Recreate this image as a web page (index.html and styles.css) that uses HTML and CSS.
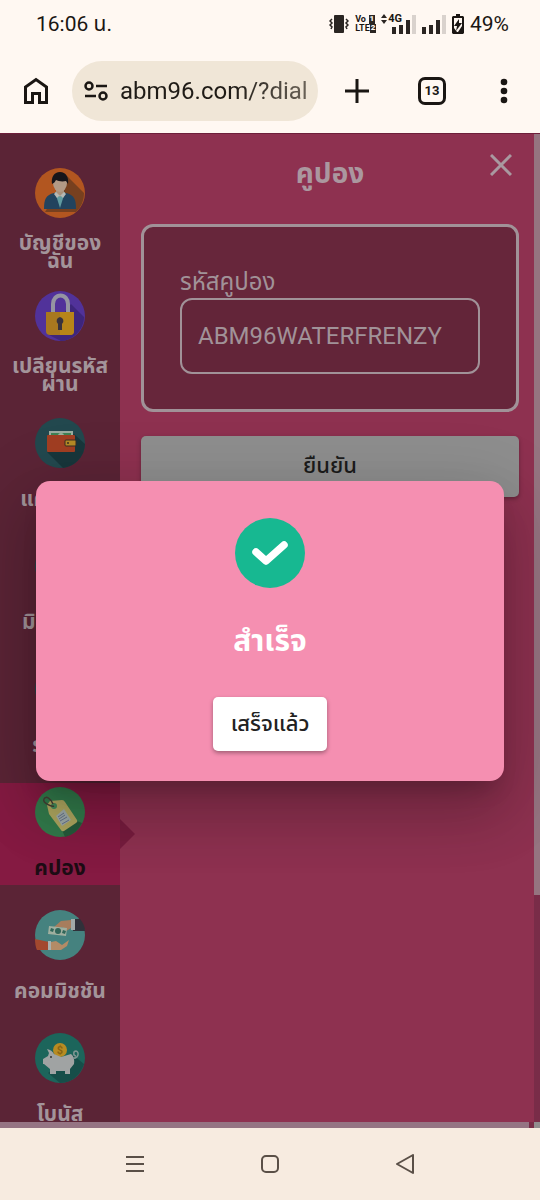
FILE: index.html
```html
<!DOCTYPE html>
<html lang="th">
<head>
    <meta charset="UTF-8">
    <meta name="viewport" content="width=device-width, initial-scale=1.0">
    <title>คูปอง</title>
    <link rel="stylesheet" href="styles.css">
</head>
<body>

    <!-- Phone status bar -->
    <div class="status-bar">
        <span class="clock">16:06 น.</span>
        <div class="status-icons">
            <svg width="20" height="20" viewBox="0 0 20 20" fill="none" stroke="#2a2522" stroke-width="1.5">
                <rect x="5" y="1" width="10" height="18" rx="1" fill="#2a2522" stroke="none"/>
                <path d="M3 5L1 7l2 2-2 2 2 2-1 2M17 5l2 2-2 2 2 2-2 2 1 2"/>
            </svg>
            <div class="volte">
                <span>Vo <b>1</b></span>
                <span>LTE<b>2</b></span>
            </div>
            <div class="signal">
                <svg width="7" height="10" viewBox="0 0 7 10" fill="#2a2522"><path d="M0 4l3-4 3 4zM0 6h6l-3 4z"/></svg>
                <span class="net">4G</span>
                <svg class="bars" width="24" height="20" viewBox="0 0 24 20" fill="#2a2522">
                    <path d="M0 13h4v7H0zM7 11h4v9H7zM14 6h4v14h-4z"/><path fill="#d9d2cd" d="M20 1h4v19h-4z"/>
                </svg>
            </div>
            <svg width="24" height="20" viewBox="0 0 24 20" fill="#2a2522">
                <path d="M0 13h4v7H0zM7 11h4v9H7zM14 6h4v14h-4z"/><path fill="#d9d2cd" d="M20 1h4v19h-4z"/>
            </svg>
            <svg width="12" height="20" viewBox="0 0 12 20">
                <path fill="#1a1613" d="M4 0h4v2h3l1 1v16l-1 1H1l-1-1V3l1-1h3z"/>
                <path fill="#fff8f2" d="M2 4h8v14H2z"/>
                <path fill="#1a1613" d="M7 5l-5 7h3l-1 5 6-8H7zM2 14v4h3zM10 12v6H6z"/>
            </svg>
            <span class="percent">49%</span>
        </div>
    </div>

    <!-- Browser toolbar -->
    <div class="toolbar">
        <button class="tool" aria-label="Home">
            <svg width="26" height="28" viewBox="0 0 26 28" fill="none" stroke="#1a1613" stroke-width="3">
                <path d="M2.500 25.500V10L13 2.500 23.500 10v15.500h-7v-9h-7v9z"/>
            </svg>
        </button>
        <div class="address">
            <svg width="24" height="20" viewBox="0 0 24 20" fill="none" stroke="#1a1613" stroke-width="2.500">
                <circle cx="5" cy="5" r="3.500"/><path d="M12 5h11M1 15h11"/><circle cx="19" cy="15" r="3.500"/>
            </svg>
            <span class="url">abm96.com/?dial</span>
        </div>
        <button class="tool tool-plus" aria-label="New tab">
            <svg width="24" height="24" viewBox="0 0 24 24" stroke="#1a1613" stroke-width="3"><path d="M12 0v24M0 12h24"/></svg>
        </button>
        <button class="tabs">13</button>
        <button class="tool" aria-label="Menu">
            <svg width="8" height="26" viewBox="0 0 8 26" fill="#1a1613"><circle cx="4" cy="4" r="3.300"/><circle cx="4" cy="13" r="3.300"/><circle cx="4" cy="22" r="3.300"/></svg>
        </button>
    </div>

    <div class="app">
        <div class="view">
            <nav class="sidebar">
                <a class="item two-line" href="#">
                    <svg class="icon" viewBox="0 0 50 50">
                        <circle cx="25" cy="25" r="25" fill="#b25620"/>
                        <path d="M32 8l17 17a25 25 0 0 1-8 19H10z" fill="#77401f"/>
                        <path d="M9 41c0-10 2-14 10-16h12c8 2 10 6 10 16z" fill="#22435e"/>
                        <path d="M20 24l5 16 5-16z" fill="#609ba0"/>
                        <path d="M21 19h8v6l-4 4-4-4z" fill="#a8917c"/>
                        <path d="M21 24l-2 2 3 4 3-3 3 3 3-4-2-2-4 4z" fill="#b6b8b5"/>
                        <ellipse cx="25" cy="15" rx="7" ry="9" fill="#b29a86"/>
                        <path d="M17 16c-1-7 2-12 8-12s9 5 8 12l-2-3c-4 1-8 0-10-1-1 2-2 3-4 4z" fill="#17151a"/>
                    </svg>
                    <span class="label">บัญชีของฉัน</span>
                </a>
                <a class="item item-tall two-line" href="#">
                    <svg class="icon" viewBox="0 0 50 50">
                        <circle cx="25" cy="25" r="25" fill="#51329a"/>
                        <path d="M36 13l13 13c0 12-10 23-23 24L12 43z" fill="#3e267c"/>
                        <path d="M18 23V13a7 8 0 0 1 15 0v10" fill="none" stroke="#9595a2" stroke-width="4"/>
                        <path d="M11 21h28v19q0 4-4 4H15q-4 0-4-4z" fill="#a8781f"/>
                        <path d="M25 21h14v19q0 4-4 4H25z" fill="#b78518"/>
                        <path d="M25 26a4 4 0 0 1 2 7v6h-4v-6a4 4 0 0 1 2-7z" fill="#38323d"/>
                    </svg>
                    <span class="label">เปลียนรหัสผ่าน</span>
                </a>
                <a class="item" href="#">
                    <svg class="icon" viewBox="0 0 50 50">
                        <circle cx="25" cy="25" r="25" fill="#22484e"/>
                        <path d="M39 16l11 10a25 25 0 0 1-22 24L12 34z" fill="#18363b"/>
                        <path d="M14 13h24v8H14z" fill="#9aaca0"/><path d="M16 15h20v6H16z" fill="#3e8254"/><circle cx="26" cy="18" r="3" fill="#9bb09c"/>
                        <rect x="12" y="17" width="28" height="17" rx="1" fill="#a13e22"/>
                        <rect x="30" y="22" width="11" height="6" rx="1" fill="#b68a25" stroke="#382c23"/><circle cx="33" cy="25" r="1" fill="#382c23"/>
                    </svg>
                    <span class="label">แคชแบ็ค</span>
                </a>
                <a class="item" href="#">
                    <svg class="icon" viewBox="0 0 50 50"><circle cx="25" cy="25" r="25" fill="#22484e"/></svg>
                    <span class="label">มิตรภาพ</span>
                </a>
                <a class="item" href="#">
                    <svg class="icon" viewBox="0 0 50 50"><circle cx="25" cy="25" r="25" fill="#22484e"/></svg>
                    <span class="label">รางวัล</span>
                </a>
                <a class="item active" href="#">
                    <svg class="icon" viewBox="0 0 50 50">
                        <circle cx="25" cy="25" r="25" fill="#327a4b"/>
                        <path d="M42 34l5 2a25 25 0 0 1-17 14l-3-7z" fill="#255a3b"/>
                        <path d="M12 18l3-4 12-1q2 0 3 2l12 18q1 2-1 3l-12 8q-2 1-3-1L14 27z" fill="#aea65f"/>
                        <path d="M29 22l7 11-9 6-6-10z" fill="#9eaaa8"/>
                        <path d="M23 30l6-4M24 32l6-4M25 34l7-4M27 37l7-4" stroke="#65718b"/>
                        <circle cx="19" cy="19" r="3" fill="#438958"/>
                        <path d="M19 19c-2 1-12-3-10-7s7 0 9 5" fill="none" stroke="#453f35" stroke-width="1.500"/>
                    </svg>
                    <span class="label">คปอง</span>
                </a>
                <a class="item" href="#">
                    <svg class="icon" viewBox="0 0 50 50">
                        <circle cx="25" cy="25" r="25" fill="#45827f"/>
                        <path d="M38 9h7q5 6 5 12H38z" fill="#30313a"/><path d="M36 9h4v11h-4z" fill="#a2aaa8"/>
                        <path d="M36 10l-10 1-7 6 1 2 8-2-5 7 2 1 11-7z" fill="#a77d5d"/>
                        <path d="M14 16l18 2-1 8-18-2z" fill="#9faf9f"/><circle cx="23" cy="21" r="3" fill="#31665a"/><path d="M16 18l3 1-1 3-3-1zM28 20l3 1-1 3-3-1z" fill="#31665a"/>
                        <path d="M0 29l14 3v8H2Q0 36 0 29z" fill="#a3482e"/><path d="M13 31h3v9h-3z" fill="#a9b0ad"/>
                        <path d="M16 32l5-1 6 4 7-5-2 6-6 4H16z" fill="#b38b66"/>
                    </svg>
                    <span class="label">คอมมิชชัน</span>
                </a>
                <a class="item" href="#">
                    <svg class="icon" viewBox="0 0 50 50">
                        <circle cx="25" cy="25" r="25" fill="#1c655b"/>
                        <path d="M38 22l11 9q-6 18-24 19L13 40z" fill="#164e49"/>
                        <circle cx="25" cy="17" r="7" fill="#b78b22"/><text class="coin" x="25" y="21">$</text>
                        <path d="M14 20l-2-4q5 1 7 5l7 3 10-3q4 3 3 10l-4 5v5h-5v-3h-9v3h-6v-5l-6-5H8v-5l5-3z" fill="#a0a3a3"/>
                        <path d="M38 25c5 1 7-6 3-7-3 0-3 5 0 5" fill="none" stroke="#7f9693" stroke-width="1.500"/><circle cx="16" cy="24" r="1" fill="#333"/>
                    </svg>
                    <span class="label">โบนัส</span>
                </a>
            </nav>

            <main class="content">
                <button class="close" aria-label="Close">
                    <svg width="22" height="22" viewBox="0 0 22 22" stroke="#a999a0" stroke-width="3"><path d="M1 1l20 20M21 1L1 21"/></svg>
                </button>
                <h1 class="title">คูปอง</h1>
                <div class="card">
                    <label class="field-label" for="coupon">รหัสคูปอง</label>
                    <input class="field" id="coupon" type="text" value="ABM96WATERFRENZY">
                </div>
                <button class="confirm">ยืนยัน</button>
            </main>

            <div class="scroll-y"><div class="thumb-y"></div></div>
        </div>
        <div class="scroll-x"><div class="thumb-x"></div><div class="corner"></div></div>

        <!-- Success dialog -->
        <div class="overlay">
            <div class="dialog" role="dialog">
                <svg width="70" height="70" viewBox="0 0 70 70">
                    <circle cx="35" cy="35" r="35" fill="#17b891"/>
                    <path d="M21 34l10 9 18-16" fill="none" stroke="#fff" stroke-width="7.500" stroke-linecap="round" stroke-linejoin="round"/>
                </svg>
                <h2 class="dialog-title">สำเร็จ</h2>
                <button class="done">เสร็จแล้ว</button>
            </div>
        </div>
    </div>

    <!-- Phone navigation bar -->
    <div class="nav-bar">
        <button class="tool" aria-label="Recent apps">
            <svg width="20" height="18" viewBox="0 0 20 18" stroke="#5a4f47" stroke-width="2"><path d="M1 2h18M1 9h18M1 16h18"/></svg>
        </button>
        <button class="tool" aria-label="Home screen">
            <svg width="20" height="20" viewBox="0 0 20 20" fill="none" stroke="#5a4f47" stroke-width="2"><rect x="2" y="2" width="16" height="16" rx="4"/></svg>
        </button>
        <button class="tool" aria-label="Back">
            <svg width="20" height="20" viewBox="0 0 20 20" fill="none" stroke="#5a4f47" stroke-width="2" stroke-linejoin="round"><path d="M18 1v18L2 10z"/></svg>
        </button>
    </div>

</body>
</html>
```

FILE: styles.css
```css
* {
    box-sizing: border-box;
}

body {
    margin: 0;
    height: 100vh;
    display: flex;
    flex-direction: column;
    background-color: #fff8f2;
    font-family: Roboto, "Noto Sans Thai", "Noto Sans", sans-serif;
    color: #1a1613;
}

button {
    font-family: inherit;
    border: none;
    padding: 0;
    cursor: pointer;
}

svg {
    display: block;
    flex-shrink: 0;
}

/* Status bar */
.status-bar {
    height: 48px;
    flex-shrink: 0;
    padding: 0 31px 0 36px;
    display: flex;
    justify-content: space-between;
    align-items: center;
    font-size: 21px;
}

.status-icons {
    display: flex;
    align-items: center;
    gap: 6px;
}

.volte {
    display: flex;
    flex-direction: column;
    width: 20px;
    font-size: 9px;
    line-height: 9px;
    font-weight: bold;
}

.volte span {
    display: flex;
    justify-content: space-between;
}

.volte b {
    background-color: #2a2522;
    color: #fff8f2;
    padding: 0 1px;
    font-size: 8px;
    line-height: 8px;
}

.signal {
    display: flex;
    align-items: flex-start;
}

.net {
    font-size: 11px;
    line-height: 10px;
    font-weight: bold;
}

.bars {
    margin-left: -10px;
}

/* Toolbar */
.toolbar {
    height: 85px;
    flex-shrink: 0;
    padding: 0 32px 0 23px;
    display: flex;
    align-items: center;
}

.tool {
    background: none;
}

.tool-plus {
    margin: 0 49px 0 27px;
}

.address {
    flex: 1;
    min-width: 0;
    display: flex;
    align-items: center;
    gap: 12px;
    height: 60px;
    margin-left: 23px;
    padding: 0 10px 0 12px;
    border-radius: 30px;
    background-color: #f0e6d7;
    overflow: hidden;
}

.url {
    font-size: 24px;
    white-space: nowrap;
    background: linear-gradient(90deg, #1f1b16 60%, #6b6358);
    background-clip: text;
    color: transparent;
}

.tabs {
    width: 28px;
    height: 28px;
    margin-right: 54px;
    border: 3px solid #1a1613;
    border-radius: 7px;
    background: none;
    color: #1a1613;
    font-size: 13px;
    font-weight: bold;
}

/* App */
.app {
    flex: 1;
    min-height: 0;
    position: relative;
    display: flex;
    flex-direction: column;
    overflow: hidden;
    background-color: #8e3150;
    border-top: 1px solid #6e1f3b;
}

.view {
    flex: 1;
    min-height: 0;
    display: flex;
}

.sidebar {
    width: 120px;
    flex-shrink: 0;
    display: flex;
    flex-direction: column;
    gap: 21px;
    padding-top: 30px;
    background-color: #5b2436;
    /* keep the arrow of the active item visible */
    overflow-x: visible;
    overflow-y: clip;
}

.item {
    position: relative;
    height: 102px;
    flex-shrink: 0;
    padding: 4px 8px 0;
    display: flex;
    flex-direction: column;
    align-items: center;
    text-align: center;
    text-decoration: none;
    color: #a3949a;
    font-size: 21px;
    line-height: 18px;
    font-weight: bold;
}

.item-tall {
    height: 106px;
}

.icon {
    width: 50px;
    height: 50px;
}

.label {
    padding-top: 22px;
}

.two-line .label {
    padding-top: 16px;
}

.active {
    background-color: #851a42;
    color: #1d0c14;
}

.active::after {
    content: "";
    position: absolute;
    left: 100%;
    top: 36px;
    border: 15px solid transparent;
    border-left-color: #771c3e;
    border-right: none;
}

.coin {
    font-size: 11px;
    text-anchor: middle;
    fill: #8a6414;
}

.content {
    flex: 1;
    min-width: 0;
    position: relative;
    display: flex;
    flex-direction: column;
    padding: 20px 15px 0 21px;
}

.close {
    position: absolute;
    top: 20px;
    right: 22px;
    background: none;
}

.title {
    margin: 0 0 30px;
    text-align: center;
    font-size: 28px;
    line-height: 40px;
    color: #ab979f;
}

.card {
    display: flex;
    flex-direction: column;
    padding: 39px 36px 35px;
    border: 3px solid #a19298;
    border-radius: 12px;
    background-color: #67263b;
}

.field-label {
    font-size: 24px;
    line-height: 32px;
    color: #a19298;
}

.field {
    width: 100%;
    height: 76px;
    padding: 0 16px;
    border: 2px solid #a19298;
    border-radius: 12px;
    background-color: #632539;
    color: #a19298;
    font-family: inherit;
    font-size: 24px;
}

.confirm {
    height: 61px;
    margin-top: 24px;
    border-radius: 5px;
    background-color: #8e8e8e;
    color: #1c1c1c;
    font-size: 22px;
    font-weight: 500;
    box-shadow: 0 2px 4px rgba(0, 0, 0, 0.3);
}

/* Scrollbars */
.scroll-y {
    width: 6px;
    background-color: #792c48;
}

.thumb-y {
    height: 77%;
    background-color: #957480;
}

.scroll-x {
    height: 6px;
    flex-shrink: 0;
    display: flex;
    justify-content: space-between;
    background-color: #792c48;
}

.thumb-x {
    width: 98%;
    background-color: #957483;
}

.corner {
    width: 6px;
    background-color: #918c8e;
}

/* Dialog */
.overlay {
    position: absolute;
    inset: 0;
    padding: 0 36px;
    display: flex;
    align-items: center;
}

.dialog {
    flex: 1;
    display: flex;
    flex-direction: column;
    align-items: center;
    padding: 37px 24px 30px;
    border-radius: 14px;
    background-color: #f58fb1;
    box-shadow: 0 16px 22px -10px rgba(0, 0, 0, 0.2), 0 36px 57px 4px rgba(0, 0, 0, 0.14), 0 14px 69px 12px rgba(0, 0, 0, 0.12);
}

.dialog-title {
    margin: 33px 0 36px;
    color: #fff;
    font-size: 30px;
    line-height: 40px;
}

.done {
    width: 114px;
    height: 54px;
    border-radius: 5px;
    background-color: #fff;
    color: #222;
    font-size: 22px;
    font-weight: 500;
    box-shadow: 0 2px 4px rgba(0, 0, 0, 0.35);
}

/* Navigation bar */
.nav-bar {
    height: 72px;
    flex-shrink: 0;
    padding: 0 125px;
    display: flex;
    align-items: center;
    justify-content: space-between;
    background-color: #f7ebe0;
}
```
